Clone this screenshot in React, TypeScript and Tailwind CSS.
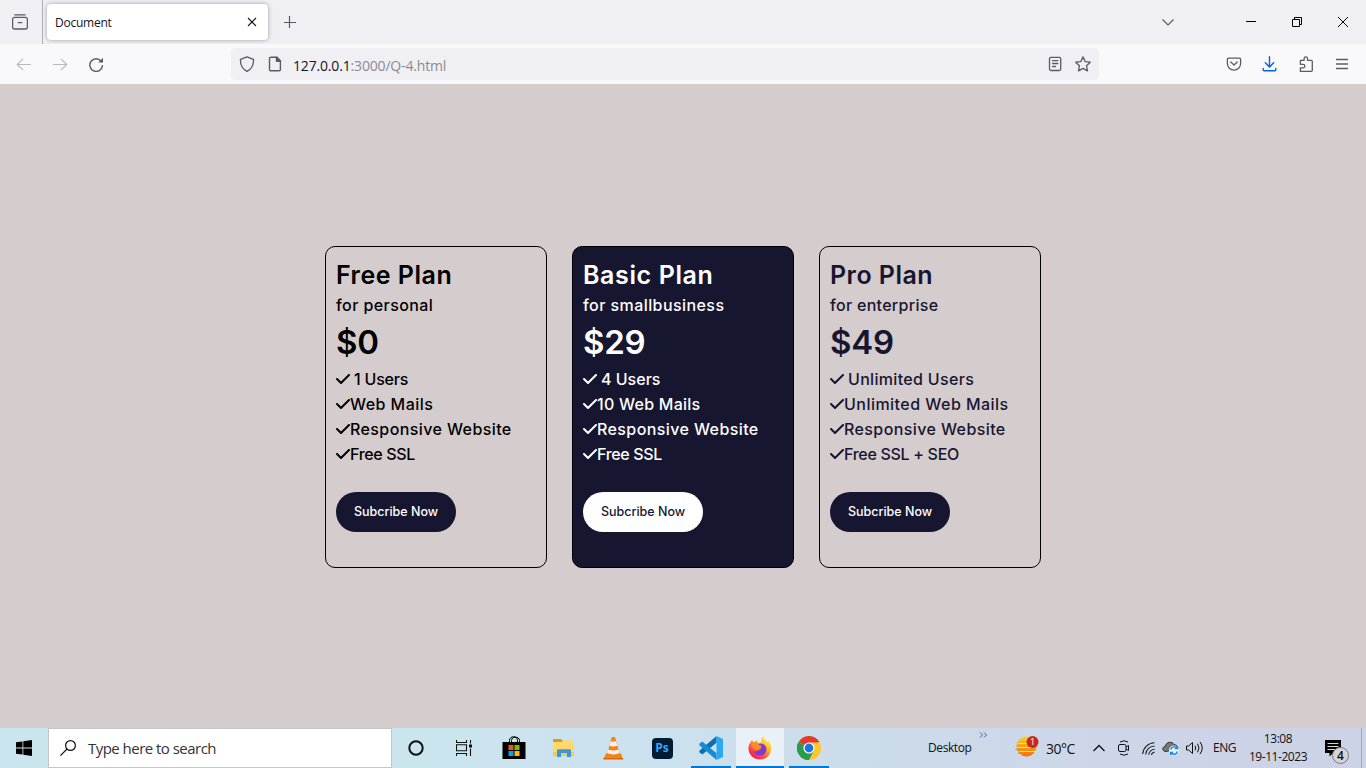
import React from "react";

type Feature = { text: string; tracking: string; spaced?: boolean };
type Plan = {
  name: string;
  nameTracking: string;
  audience: string;
  audienceTracking: string;
  price: string;
  priceTracking: string;
  features: Feature[];
  card: string;
  button: string;
};

const plans: Plan[] = [
  {
    name: "Free Plan",
    nameTracking: "tracking-[0.500px]",
    audience: "for personal",
    audienceTracking: "tracking-[0.420px]",
    price: "$0",
    priceTracking: "tracking-[-0.300px]",
    features: [
      { text: "1 Users", tracking: "tracking-[-0.200px]", spaced: true },
      { text: "Web Mails", tracking: "tracking-[0.450px]" },
      { text: "Responsive Website", tracking: "tracking-[0.400px]" },
      { text: "Free SSL", tracking: "tracking-[-0.350px]" },
    ],
    card: "text-black",
    button: "bg-[#171630] text-white",
  },
  {
    name: "Basic Plan",
    nameTracking: "tracking-[0.620px]",
    audience: "for smallbusiness",
    audienceTracking: "tracking-[0.430px]",
    price: "$29",
    priceTracking: "tracking-[-0.300px]",
    features: [
      { text: "4 Users", tracking: "tracking-[0px]", spaced: true },
      { text: "10 Web Mails", tracking: "tracking-[0.250px]" },
      { text: "Responsive Website", tracking: "tracking-[0.400px]" },
      { text: "Free SSL", tracking: "tracking-[-0.350px]" },
    ],
    card: "bg-[#171630] text-white",
    button: "bg-white text-[#171630]",
  },
  {
    name: "Pro Plan",
    nameTracking: "tracking-[0.450px]",
    audience: "for enterprise",
    audienceTracking: "tracking-[0.300px]",
    price: "$49",
    priceTracking: "tracking-[-0.200px]",
    features: [
      { text: "Unlimited Users", tracking: "tracking-[0.320px]", spaced: true },
      { text: "Unlimited Web Mails", tracking: "tracking-[0.470px]" },
      { text: "Responsive Website", tracking: "tracking-[0.400px]" },
      { text: "Free SSL + SEO", tracking: "tracking-[-0.300px]" },
    ],
    card: "text-[#171630]",
    button: "bg-[#171630] text-white",
  },
];

function Check() {
  return (
    <svg className="mb-0.5 h-4 w-3.5 shrink-0" viewBox="0 0 448 512" fill="currentColor">
      <path d="M438.600 105.400c12.500 12.500 12.500 32.800 0 45.300l-256 256c-12.500 12.500-32.800 12.500-45.300 0l-128-128c-12.500-12.500-12.500-32.800 0-45.300s32.800-12.500 45.300 0L160 338.700 393.400 105.400c12.500-12.500 32.800-12.500 45.300 0z" />
    </svg>
  );
}

function PlanCard({ plan }: { plan: Plan }) {
  return (
    <div className={`flex h-[322px] w-[222px] flex-col items-start rounded-[10px] border border-black px-2.5 pt-[9px] font-[Inter,sans-serif] whitespace-nowrap ${plan.card}`}>
      <h2 className={`h-[37px] text-[25px] leading-[38px] font-semibold ${plan.nameTracking}`}>{plan.name}</h2>
      <p className={`h-[25px] text-base leading-6 font-medium ${plan.audienceTracking}`}>{plan.audience}</p>
      <p className={`h-[49px] text-[33px] leading-[49px] font-semibold ${plan.priceTracking}`}>{plan.price}</p>
      <ul>
        {plan.features.map((f) => (
          <li key={f.text} className="flex h-[25px] items-center">
            <Check />
            <span className={`text-base leading-[25px] font-medium ${f.spaced ? "pl-1" : ""} ${f.tracking}`}>{f.text}</span>
          </li>
        ))}
      </ul>
      <button className={`mt-[25px] h-10 w-[120px] rounded-full text-[12.500px] font-medium tracking-[0px] ${plan.button}`}>Subcribe Now</button>
    </div>
  );
}

function TabStrip() {
  return (
    <div className="flex h-11 items-center bg-[#f0eff4]">
      <div className="flex h-11 w-[43px] items-center justify-center border-r border-[#b0afb5] pr-[3px]">
        <svg className="size-4" viewBox="0 0 16 16" fill="none" stroke="#5b5b66" strokeWidth="1.300">
          <path d="M2.800 .8h10.400M2.500 3.300h11a1.900 1.900 0 0 1 1.900 1.900v7.900a1.900 1.900 0 0 1-1.900 1.900h-11A1.900 1.900 0 0 1 .6 13.100V5.200a1.900 1.900 0 0 1 1.900-1.900zM6.300 8.700h3.500" strokeLinecap="round" />
        </svg>
      </div>
      <div className="ml-1 flex h-9 w-[221px] items-center justify-between rounded bg-white pr-2.5 pl-2 shadow-[0_0_4px_rgba(90,90,100,0.55)]">
        <span className="pt-0.5 text-[12px] tracking-[-0.250px] text-[#15141a]">Document</span>
        <svg className="size-[11px]" viewBox="0 0 11 11" fill="none" stroke="#15141a" strokeWidth="1.100">
          <path d="M1 1l8 8M9 1l-8 8" />
        </svg>
      </div>
      <svg className="ml-4 size-3" viewBox="0 0 12 12" fill="none" stroke="#5b5b66" strokeWidth="1.200">
        <path d="M5.500 0v12M0 6.500h12" />
      </svg>
      <div className="ml-auto flex items-center">
        <svg className="mr-[72px] h-[7px] w-3" viewBox="0 0 12 7" fill="none" stroke="#5b5b66" strokeWidth="1.200">
          <path d="M.5 .5L6 6 11.500 .5" />
        </svg>
        <svg className="mr-9 h-[11px] w-2.5" viewBox="0 0 10 11" stroke="#000"><path d="M0 4.500h10" /></svg>
        <svg className="mr-9 h-[11px] w-2.5" viewBox="0 0 10 11" fill="none" stroke="#000">
          <path d="M.5 2.500h7v7h-7zM2.500 2V.5h7v7H8" />
        </svg>
        <svg className="mr-[18px] h-[11px] w-2.5" viewBox="0 0 10 11" stroke="#000"><path d="M0 0l10 10M10 0L0 10" /></svg>
      </div>
    </div>
  );
}

function Toolbar() {
  return (
    <div className="flex h-10 items-center bg-[#f9f9fb] text-[#5b5b66]">
      <svg className="ml-4 size-4 text-[#b9b9c0]" viewBox="0 0 16 16" fill="none" stroke="currentColor" strokeWidth="1.200"><path d="M15 8.500H1.500M7 2.800L1.300 8.500 7 14.200" /></svg>
      <svg className="ml-5 size-4 text-[#b9b9c0]" viewBox="0 0 16 16" fill="none" stroke="currentColor" strokeWidth="1.200"><path d="M1 8.500h13.500M9 2.800l5.700 5.700L9 14.200" /></svg>
      <svg className="ml-5 size-4" viewBox="0 0 16 16" fill="none" stroke="currentColor" strokeWidth="1.400">
        <path d="M13.400 5.600A6.300 6.300 0 1 0 14.400 9.800" strokeLinecap="round" />
        <path d="M15 1.800v4.700h-4.700z" fill="currentColor" stroke="none" />
      </svg>
      <div className="ml-[127px] flex h-8 w-[868px] items-center rounded bg-[#f0eff4]">
        <svg className="ml-2 size-4" viewBox="0 0 16 16" fill="none" stroke="currentColor" strokeWidth="1.300" strokeLinejoin="round">
          <path d="M8 .8l6.500 2.600c.3 5.200-1.400 9.200-6.500 12C2.900 12.600 1.200 8.600 1.500 3.400z" />
        </svg>
        <svg className="ml-3 size-4" viewBox="0 0 16 16" fill="none" stroke="currentColor" strokeWidth="1.400" strokeLinejoin="round">
          <path d="M3.800 1.200H10L13.400 4.700v8.800a1.300 1.300 0 0 1-1.300 1.300H3.800a1.300 1.300 0 0 1-1.300-1.300v-11a1.300 1.300 0 0 1 1.300-1.300z" />
          <path d="M9.500 1.200v4h4z" fill="currentColor" />
        </svg>
        <span className="ml-2.5 pt-0.5 text-[14px] tracking-[-0.170px] whitespace-nowrap text-[#8a8a92]"><span className="text-[#15141a]">127.0.0.1</span>:3000/Q-4.html</span>
        <svg className="mr-3 ml-auto size-4" viewBox="0 0 16 16" fill="none" stroke="currentColor" strokeWidth="1.300" strokeLinecap="round">
          <rect x="2.500" y="1.300" width="11.200" height="13.200" rx="1.500" />
          <path d="M5.500 4.700h5.300M5.500 7.500h5.300M5.500 10.500h3" />
        </svg>
        <svg className="mr-2 size-4" viewBox="0 0 16 16" fill="none" stroke="currentColor" strokeWidth="1.300" strokeLinejoin="round">
          <path d="M8 .9l2.200 4.700 5.100.6-3.800 3.500 1 5.200L8 12.400l-4.500 2.500 1-5.200L.7 6.200l5.100-.6z" />
        </svg>
      </div>
      <svg className="ml-[127px] size-4" viewBox="0 0 16 16" fill="none" stroke="currentColor" strokeWidth="1.300" strokeLinecap="round" strokeLinejoin="round">
        <path d="M2.600 2.200h10.800a1.200 1.200 0 0 1 1.200 1.200v4.100a6.600 6.600 0 0 1-13.200 0V3.400a1.200 1.200 0 0 1 1.200-1.200z" />
        <path d="M4.800 6L8 9l3.200-3" />
      </svg>
      <svg className="ml-5 size-4" viewBox="0 0 16 16" fill="none" stroke="#0561e1" strokeWidth="1.400" strokeLinecap="round">
        <path d="M7.500 .7v10M3.300 6.700l4.200 4.200 4.200-4.200M1.200 12.500v1.200c0 .6.500 1.100 1.100 1.100h10.400c.6 0 1.100-.5 1.100-1.100v-1.200" />
      </svg>
      <svg className="ml-5 size-4" viewBox="0 0 16 16" fill="none" stroke="currentColor" strokeWidth="1.300" strokeLinejoin="round">
        <path d="M2.400 4.300h3.700V2.500a1.600 1.600 0 0 1 3.400 0v1.800h3.600a1.200 1.200 0 0 1 1.200 1.200v8.700a1.200 1.200 0 0 1-1.200 1.200H2.400v-3.500h2.700a1.600 1.600 0 0 0 0-3.500H2.400z" />
      </svg>
      <svg className="ml-5 size-4" viewBox="0 0 16 16" fill="none" stroke="currentColor" strokeWidth="1.300"><path d="M2 3.500h12M2 8h12M2 12.500h12" /></svg>
    </div>
  );
}

function StoreIcon() {
  return (
    <svg className="h-6 w-6" viewBox="0 0 24 24">
      <path d="M7.500 6.500V4.500c0-5 8-5 8 0v2M9.500 6.500V4.500c0-4.500 8-4.500 8 0v2" fill="none" stroke="#000" />
      <path d="M.5 6h23v17H.5z" />
      <path d="M6.500 9h5v5h-5z" fill="#f25022" />
      <path d="M12.500 9h5v5h-5z" fill="#7fba00" />
      <path d="M6.500 15h5v5h-5z" fill="#00a4ef" />
      <path d="M12.500 15h5v5h-5z" fill="#ffb900" />
    </svg>
  );
}

function FolderIcon() {
  return (
    <svg className="h-6 w-6" viewBox="0 0 24 24">
      <path d="M2 3h8l2 2v4H2z" fill="#d99e12" />
      <path d="M2 6h9l1.500-1.500h9.500c.6 0 1 .4 1 1V20H2z" fill="#ffd968" />
      <path d="M2 16h21v4H2z" fill="#fbc94a" />
      <path d="M6 21v-6.500c0-.8.500-1.300 1.300-1.300h11.400c.8 0 1.300.5 1.300 1.300V21h-4v-4h-6v4z" fill="#3b96dc" />
    </svg>
  );
}

function VlcIcon() {
  return (
    <svg className="h-6 w-6" viewBox="0 0 24 24">
      <path d="M5 17.500h15l2 5.500H2.500z" fill="#f58410" />
      <path d="M10.800 1h3.200l5 18c-2.500 2.300-10.500 2.300-13.200 0z" fill="#f0851a" />
      <path d="M9.600 5.500h5.600l1.200 4.200c-2 1-6 1-8 0z" fill="#f4f0ed" />
      <path d="M7.300 13.500c3 1.300 7.200 1.300 10.200 0l1 3.600c-3 1.700-9.300 1.700-12.200 0z" fill="#f4f0ed" />
      <path d="M2.500 22h19.600v1.500H2.300z" fill="#d96605" />
    </svg>
  );
}

function VsCodeIcon() {
  return (
    <svg className="mt-0.5 h-6 w-6" viewBox="0 0 24 24">
      <path d="M17.500 0v6.800L3.300 18.500.3 16.300v-1.600z" fill="#0a6fb5" />
      <path d="M17.500 24v-6.800L3.300 5.500.3 7.700v1.600z" fill="#168bd2" />
      <path d="M17.500 0L24 3v18l-6.500 3z" fill="#29a9f1" />
    </svg>
  );
}

function FirefoxIcon() {
  return (
    <svg className="mt-0.5 h-6 w-6" viewBox="0 0 24 24">
      <defs>
        <linearGradient id="fox" x1="0.85" y1="0.1" x2="0.2" y2="0.95">
          <stop offset="0" stopColor="#fff14a" />
          <stop offset="0.35" stopColor="#ffb52c" />
          <stop offset="0.65" stopColor="#ff5a36" />
          <stop offset="1" stopColor="#ef1560" />
        </linearGradient>
      </defs>
      <path d="M2.300 6.500L4 4l1.200 2.300 2-.5 2-2.300.4 3 3.600.2C12.500 3 14 1 15.500 0c.6 3 2.600 4 4.200 6l.7-1.200C23 8 23.700 11 23 14.500 22 20 17.500 23.500 12 23.500S1 19.500.5 13.500C.2 10.500 1 8.500 2.300 6.500z" fill="url(#fox)" />
      <path d="M12 7.500c4 0 6.500 2.500 6.500 5.800 0 3.500-2.700 6.200-6.300 6.200-3.400 0-6-2.300-6.200-5 1.500 1.500 3.500 1 5-.5l2-1.200c.5-1.200-.8-1.800-2.600-1.800C9.500 9 10.500 7.500 12 7.500z" fill="#7b3bd6" />
      <path d="M3 7c3-1.500 6.500-.8 8 2l2.700.7c.3 1.400-2 2-2.800 3.100-1.200 1.500-3 1.200-4.400.7C4 12.500 3 10 3 7z" fill="#ff8a26" />
    </svg>
  );
}

function ChromeIcon() {
  return (
    <svg className="mt-0.5 h-6 w-6" viewBox="0 0 24 24">
      <path d="M12 12L1.600 6A12 12 0 0 1 22.400 6z" fill="#e33b2e" />
      <path d="M12 12L22.400 6A12 12 0 0 1 12 24z" fill="#fcc72a" />
      <path d="M12 12v12A12 12 0 0 1 1.600 6z" fill="#2a9c4a" />
      <path d="M12 6.500h10.700L17 14.500 12 24l-.5-6z" fill="#fcc72a" />
      <path d="M1.600 6l5.600 8.800 4.800 2.700 4.800-2.800L12 24A12 12 0 0 1 1.600 6z" fill="#2a9c4a" />
      <circle cx="12" cy="12" r="5.600" fill="#fff" />
      <circle cx="12" cy="12" r="4.400" fill="#1a73e8" />
    </svg>
  );
}

function Taskbar() {
  return (
    <div className="flex h-10 bg-linear-to-r from-[#cbe5ef] from-35% to-[#cdd3e7] to-90% text-[#111]">
      <div className="flex w-12 items-center justify-center">
        <svg className="size-4" viewBox="0 0 16 16"><path d="M0 2.300l6.500-.9v6.200H0zM7.300 1.300L16 0v7.600H7.300zM0 8.400h6.500v6.200L0 13.700zM7.300 8.400H16V16l-8.700-1.300z" /></svg>
      </div>
      <div className="flex w-[344px] items-center border border-[#c6c6c6] bg-white">
        <svg className="ml-[11px] size-4" viewBox="0 0 16 16" fill="none" stroke="#111" strokeWidth="1.200"><circle cx="10.500" cy="5.500" r="4.900" /><path d="M7 9L.4 15.600" /></svg>
        <span className="ml-3 text-[15px] tracking-[-0.530px] text-[#333]">Type here to search</span>
      </div>
      <div className="flex w-12 items-center justify-center">
        <svg className="size-4" viewBox="0 0 16 16" fill="none" stroke="#111" strokeWidth="2"><circle cx="8" cy="8" r="6.700" /></svg>
      </div>
      <div className="flex w-12 items-center justify-center">
        <svg className="size-4" viewBox="0 0 16 16" fill="none" stroke="#111" strokeWidth="1.100">
          <path d="M.5 0v2.500h10V0M.5 16v-2.500h10V16M.5 4.800h10v6H.5zM14.500 0v3.500M14.500 8.500V16" />
          <path d="M13 4.500h3v3h-3z" fill="#111" stroke="none" />
        </svg>
      </div>
      <div className="flex w-[52px] items-center justify-center"><StoreIcon /></div>
      <div className="flex w-12 items-center justify-center pr-[3px]"><FolderIcon /></div>
      <div className="flex w-[50px] items-center justify-center pr-px"><VlcIcon /></div>
      <div className="flex w-12 items-center justify-center">
        <div className="flex size-[21px] items-center justify-center rounded bg-[#001d34] text-[12px] leading-none font-bold text-[#31a8ff]">Ps</div>
      </div>
      <div className="ml-[5px] flex w-10 items-center justify-center border-b-2 border-[#0078d7]"><VsCodeIcon /></div>
      <div className="ml-[5px] flex w-12 items-center justify-center border-b-2 border-[#0078d7] bg-[#e9f0f7]"><FirefoxIcon /></div>
      <div className="ml-[5px] flex w-10 items-center justify-center border-b-2 border-[#0078d7]"><ChromeIcon /></div>
      <div className="ml-auto flex text-[12px]">
        <span className="w-[51px] leading-10 tracking-[-0.400px]">Desktop</span>
        <svg className="mt-1 h-[6px] w-[9px]" viewBox="0 0 9 6" fill="none" stroke="#4d5ba8"><path d="M1 .5L3.500 3 1 5.500M5 .5L7.500 3 5 5.500" /></svg>
        <svg className="mt-[7px] ml-[27px] size-6" viewBox="0 0 24 24">
          <defs><linearGradient id="sun" x1="0" y1="0" x2="0" y2="1"><stop offset="0" stopColor="#ffd21e" /><stop offset="1" stopColor="#f06d0b" /></linearGradient></defs>
          <circle cx="11.500" cy="11.500" r="10" fill="url(#sun)" />
          <path d="M3 8.500h11M2 12.500h15M4 16.500h17" stroke="#f3dfae" strokeWidth="1" />
          <path d="M.5 14.500h7M3 18.500h6" stroke="#f28a12" />
          <circle cx="17.500" cy="7" r="6" fill="#c42b1c" />
          <text x="17.500" y="10.300" fontSize="9" textAnchor="middle" fill="#fff">1</text>
        </svg>
        <span className="ml-[7px] w-[47px] pt-px text-[14px] leading-10 tracking-[-0.500px]">30°C</span>
        <svg className="mt-4 h-[8px] w-3" viewBox="0 0 12 8" fill="none" stroke="#111" strokeWidth="1.300"><path d="M.5 7L6 1.500 11.500 7" /></svg>
        <svg className="mt-3 ml-[13px] h-4 w-3" viewBox="0 0 12 16" fill="none" stroke="#111">
          <rect x=".5" y="4.500" width="7.500" height="7" rx="1.500" /><path d="M8 7l2.500-1.500v5L8 9M2 2Q6-.5 10 2M2 14q4 2.500 8 0" />
        </svg>
        <svg className="mt-[14px] ml-[12px] size-[13px]" viewBox="0 0 13 13" fill="none" stroke="#222" strokeWidth="1.100">
          <path d="M.7 12A12 12 0 0 1 12.500.8M3.700 12.500a9 9 0 0 1 9-8.500M6.700 12.800a6 6 0 0 1 6-5.500M9.500 13a3 3 0 0 1 3.300-2.700" />
        </svg>
        <svg className="mt-3 ml-[7px] h-4 w-[18px]" viewBox="0 0 18 16">
          <path d="M4 11.500C-.3 11.500 0 6.500 3.300 6.300 4 1.500 10.500 1 12 4.600c3 .2 4 2 3.800 4.400z" fill="#777" stroke="#333" />
          <circle cx="12" cy="10.500" r="5" fill="#e8f3fb" />
          <path d="M8.700 9.500a3.600 3.600 0 0 1 6.400-1.300M15.400 11.500A3.600 3.600 0 0 1 9 12.900M15.400 6v2.500h-2.600M8.700 15v-2.500h2.600" fill="none" stroke="#1687d9" strokeWidth="1.300" />
        </svg>
        <svg className="mt-[13px] ml-[6px] h-[14px] w-[18px]" viewBox="0 0 18 14" fill="none" stroke="#111">
          <path d="M.5 5h2.200l3.800-3.500v11L2.700 9H.5zM9 4.700q1.500 2.300 0 4.600M11.500 2.700q3 4.300 0 8.600M14 .9q4.500 6.100 0 12.200" />
        </svg>
        <span className="ml-[9px] w-[26px] leading-10 tracking-[-0.500px]">ENG</span>
        <div className="ml-[7px] flex w-[64px] flex-col items-center pt-[2px] text-[12px] leading-[18px] tracking-[-0.450px] whitespace-nowrap">
          <span>13:08</span>
          <span>19-11-2023</span>
        </div>
        <div className="relative mt-3 ml-[15px] h-7 w-[25px]">
          <svg className="h-[17px] w-4" viewBox="0 0 16 17"><path d="M0 0h16v13h-8l-3.500 3.500V13H0z" /><path d="M2.500 3.500h11M2.500 6.500h11M2.500 9.500h8" stroke="#cdd3e7" /></svg>
          <span className="absolute top-[7px] left-[7px] flex size-[17px] items-center justify-center rounded-full border border-[#777] bg-[#d4d5d8] text-[12px] leading-none font-semibold">4</span>
        </div>
        <div className="ml-[11px] w-[5px] border-l border-[#a4a9ba]" />
      </div>
    </div>
  );
}

export default function App() {
  return (
    <div className="flex h-[768px] w-[1366px] flex-col overflow-hidden bg-[#d5cccd] font-['Open_Sans',sans-serif]">
      <TabStrip />
      <Toolbar />
      <main className="flex flex-1 items-center justify-center gap-[25px] pt-0.5">
        {plans.map((plan) => (
          <PlanCard key={plan.name} plan={plan} />
        ))}
      </main>
      <Taskbar />
    </div>
  );
}
